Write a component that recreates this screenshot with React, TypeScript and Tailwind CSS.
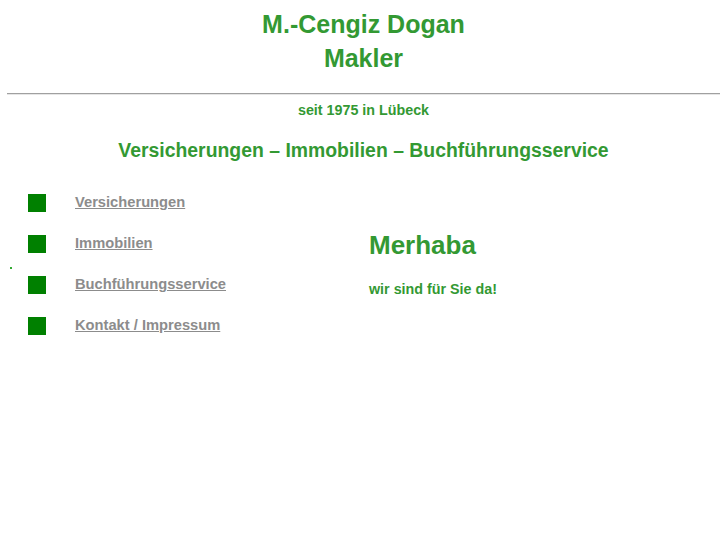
const links = ['Versicherungen', 'Immobilien', 'Buchführungsservice', 'Kontakt / Impressum'];

export default function App() {
  return (
    <div className="w-[727px] h-[545px] bg-white font-['Liberation_Sans',Arial,sans-serif] text-[#339933] overflow-hidden">
      <div className="text-center font-bold text-[25px] leading-[34px] pt-[7px]">
        <div>M.-Cengiz Dogan</div>
        <div>Makler</div>
      </div>
      <div className="mx-[7px] mt-[18px] border-t border-t-[#a0a0a0] border-b border-b-[#e6e6e6] h-[2px]" />
      <div className="text-center font-bold text-[14.3px] leading-[16px] mt-[7px]">seit 1975 in Lübeck</div>
      <div className="text-center font-bold text-[19.4px] leading-[22px] mt-[21px]">
        Versicherungen – Immobilien – Buchführungsservice
      </div>
      <div className="flex mt-[33px]">
        <div className="w-[28px] flex items-center pl-[10px]">
          <div className="w-[2px] h-[2px] bg-[#33aa33] mt-[6px]" />
        </div>
        <div className="w-[341px] flex flex-col gap-[23px]">
          {links.map((l) => (
            <div key={l} className="flex items-center h-[18px]">
              <div className="w-[18px] h-[18px] bg-[#008000]" />
              <a href="#" className="ml-[29px] text-[14.7px] font-bold text-[#8c8c8c] underline leading-[18px] -mt-[2px]">
                {l}
              </a>
            </div>
          ))}
        </div>
        <div className="flex flex-col pt-[36px]">
          <div className="font-bold text-[26px] leading-[30px]">Merhaba</div>
          <div className="font-bold text-[14.3px] leading-[16px] mt-[21px]">wir sind für Sie da!</div>
        </div>
      </div>
    </div>
  );
}
